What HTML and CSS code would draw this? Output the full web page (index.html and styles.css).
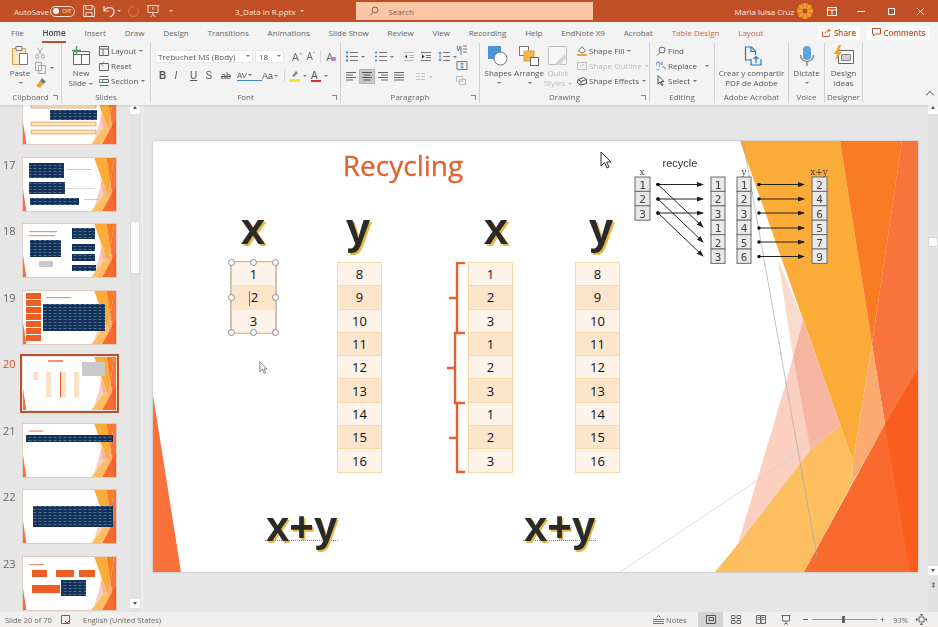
FILE: index.html
```html
<!DOCTYPE html>
<html>
<head>
	<title>3_Data in R.pptx - PowerPoint</title>
	<link rel="stylesheet" href="styles.css">
</head>
<body>
	<svg class="defs" width="0" height="0">
		<defs>
			<pattern id="code" width="5" height="3" patternUnits="userSpaceOnUse">
				<rect width="5" height="3" fill="#12325a"/>
				<rect x="0.5" y="1" width="3" height="0.6" fill="#7d93ad"/>
			</pattern>
		</defs>
		<symbol id="art" viewBox="0 0 765 431" preserveAspectRatio="none">
			<polygon fill="#fbab38" points="587,0 687,0 719,203 700,320"/>
			<polygon fill="#f97c25" points="687,0 749,0 719,203"/>
			<polygon fill="#f9733c" points="749,0 765,0 765,227 732,283 719,203"/>
			<polygon fill="#fbaa70" points="719,203 732,283 699,342 700,320"/>
			<polygon fill="#fadccf" points="625,119 650,179 640,216"/>
			<polygon fill="#f5b5a0" points="650,179 687,283 657,310 640,216"/>
			<polygon fill="#fbd0c0" points="640,216 659,316 585,403 632,245"/>
			<polygon fill="#fdbe5f" points="687,283 700,320 699,342 651,431 562,431 585,403 657,310"/>
			<polygon fill="#f96a2e" points="765,227 765,431 651,431 732,283"/>
			<polygon fill="#fa5e1e" points="732,283 765,227 765,431 757,431"/>
			<polygon fill="#f97039" points="0,254 28,431 0,431"/>
			<line stroke="#a8a8a8" stroke-width="0.7" x1="590" y1="0" x2="664" y2="416"/>
			<line stroke="#cfcfcf" stroke-width="0.7" x1="687" y1="284" x2="467" y2="431"/>
		</symbol>
	</svg>

	<div class="app">
		<header class="titlebar">
			<span class="autosave">AutoSave</span>
			<span class="toggle"><i></i>Off</span>
			<svg class="qa qa-save" width="14" height="14" viewBox="0 0 14 14" fill="none" stroke="#f7ddd0"><path d="M1.5 1.5h9l2 2v9h-11z"/><path d="M4 1.5v4h6v-4M4 12.5v-4h6v4"/></svg>
			<svg class="qa qa-undo" width="14" height="14" viewBox="0 0 14 14" fill="none" stroke="#f7ddd0" stroke-width="1.2"><path d="M2 2v5h5M2 7c2-4 9-5 10 0 .5 3-2 5-4 6"/></svg>
			<span class="tcaret"></span>
			<svg class="qa qa-redo" width="12" height="12" viewBox="0 0 12 12" fill="none" stroke="#dc7a52"><path d="M9.5 2.5a5 5 0 1 1-3-1"/></svg>
			<svg class="qa qa-show" width="14" height="14" viewBox="0 0 14 14" fill="none" stroke="#f7ddd0"><path d="M1 1.500h12M2 1.500v7h10v-7M7 8.500v2M4.500 13l2.500-2.500 2.500 2.500M7 3v3"/></svg>
			<span class="tcaret tcaret-last"></span>
			<span class="doc-name">3_Data in R.pptx</span>
			<span class="tcaret tcaret-doc"></span>
			<div class="search">
				<svg width="10" height="10" viewBox="0 0 10 10" fill="none" stroke="#8a5a44"><circle cx="6" cy="4" r="3"/><path d="M4 6.500 1 9.500"/></svg>
				<span>Search</span>
			</div>
			<span class="user">Maria luisa Cruz</span>
			<svg class="avatar" width="16" height="16" viewBox="0 0 16 16"><circle cx="8" cy="8" r="8" fill="#e8801f"/><path d="M8 0v16M0 8h16M2.300 2.300l11.400 11.400M13.700 2.300 2.300 13.700" stroke="#f4b245" stroke-width="1.300"/><circle cx="8" cy="8" r="2.600" fill="#a9561c"/></svg>
			<svg class="win win-opts" width="10" height="9" viewBox="0 0 10 9" fill="none" stroke="#fff"><path d="M.5.500h9v8h-9zM.5 3h9M5 3v5.500"/></svg>
			<svg class="win win-min" width="9" height="9" viewBox="0 0 9 9" stroke="#fff"><path d="M0 4.500h8"/></svg>
			<svg class="win win-max" width="9" height="9" viewBox="0 0 9 9" fill="none" stroke="#fff"><path d="M1.500 1.500h6v6h-6z"/></svg>
			<svg class="win win-close" width="9" height="9" viewBox="0 0 9 9" stroke="#fff"><path d="M1 1l7 7M8 1 1 8"/></svg>
		</header>

		<nav class="tabs">
			<span>File</span>
			<span class="tab-on">Home</span>
			<span>Insert</span>
			<span>Draw</span>
			<span>Design</span>
			<span>Transitions</span>
			<span>Animations</span>
			<span>Slide Show</span>
			<span>Review</span>
			<span>View</span>
			<span>Recording</span>
			<span>Help</span>
			<span>EndNote X9</span>
			<span>Acrobat</span>
			<span class="tab-ctx">Table Design</span>
			<span class="tab-ctx">Layout</span>
			<div class="tab-btns">
				<span class="tab-btn tab-share"><svg width="9" height="9" viewBox="0 0 9 9" fill="none" stroke="#c2502b"><path d="M.5 3.500v5h7v-2M3 5.500c0-2 2-3 5-3M6 .5l2 2-2 2"/></svg>Share</span>
				<span class="tab-btn tab-comments"><svg width="9" height="9" viewBox="0 0 9 9" fill="none" stroke="#c2502b"><path d="M.5.500h8v5.500h-5l-2 2v-2h-1z"/></svg>Comments</span>
			</div>
		</nav>

		<section class="ribbon">
			<div class="group g-clip">
				<div class="group-body">
					<div class="big big-paste">
						<svg width="20" height="22" viewBox="0 0 20 22" fill="none"><path d="M2.500 3.500h13v16h-13z" stroke="#d59a45" fill="#f8e7c9"/><path d="M6 1.500h6v4h-6z" stroke="#777" fill="#f3f3f3"/><path d="M9.500 8.500h8v11h-8z" stroke="#777" fill="#fff"/></svg>
						<span class="lbl">Paste</span>
						<span class="caret"></span>
					</div>
					<div class="clip-tools">
						<svg width="10" height="12" viewBox="0 0 10 12" fill="none" stroke="#a8a8a8"><path d="M2 .5l5 7M8 .5l-5 7"/><circle cx="2" cy="9.500" r="1.700"/><circle cx="8" cy="9.500" r="1.700"/></svg>
						<span class="clip-copy"><svg width="11" height="12" viewBox="0 0 11 12" fill="none" stroke="#a8a8a8"><path d="M.5.500h6v8h-6zM3.500 3.500h7v8h-7z" fill="#f3f3f3"/></svg><span class="caret"></span></span>
						<svg width="12" height="12" viewBox="0 0 12 12"><path d="M7 1l4 4-3 2-3-3z" fill="#777"/><path d="M5 4l3 3-3 4-4-2z" fill="#eaa33c"/></svg>
					</div>
				</div>
				<div class="group-label">Clipboard<span class="launch"></span></div>
			</div>

			<div class="group g-slides">
				<div class="group-body">
					<div class="big big-slide">
						<svg width="22" height="22" viewBox="0 0 22 22" fill="none"><path d="M3.500 6.500h16v13h-16z" stroke="#666" fill="#f8f8f8"/><path d="M3.500 9.500h16M11.500 9.500v10" stroke="#666"/><path d="M6.500 1v9M2 5.500h9" stroke="#4fa36a" stroke-width="1.400"/></svg>
						<span class="lbl">New</span>
						<span class="lbl">Slide <span class="caret"></span></span>
					</div>
					<div class="col col-slides">
						<span class="item"><svg width="10" height="10" viewBox="0 0 10 10" fill="none" stroke="#666"><path d="M.5.500h9v9h-9zM.5 3h9M4 3v6.500"/></svg>Layout <span class="caret"></span></span>
						<span class="item"><svg width="10" height="10" viewBox="0 0 10 10" fill="none" stroke="#666"><path d="M.5 2.500h9v7h-9z"/><path d="M4.500 1 2 3l2.500 2" stroke="#3a86c8"/></svg>Reset</span>
						<span class="item"><svg width="10" height="10" viewBox="0 0 10 10" fill="none" stroke="#666"><path d="M.5 3.500h9v3h-9zM.5.500h9M.5 9.500h9"/><path d="M.5 3.500h3v3h-3z" stroke="#4fa36a"/></svg>Section <span class="caret"></span></span>
					</div>
				</div>
				<div class="group-label">Slides</div>
			</div>

			<div class="group g-font">
				<div class="group-body rows">
					<div class="row row-top">
						<span class="combo combo-font">Trebuchet MS (Body)<span class="caret"></span></span>
						<span class="combo combo-size">18<span class="caret"></span></span>
						<span class="glyph glyph-grow">A<sup>^</sup></span>
						<span class="glyph glyph-shrink">A<sup>ˇ</sup></span>
						<span class="sep"></span>
						<span class="glyph glyph-clear">A<i></i></span>
					</div>
					<div class="row row-fmt">
						<b class="fmt">B</b>
						<i class="fmt">I</i>
						<u class="fmt">U</u>
						<span class="fmt">S</span>
						<s class="fmt fmt-ab">ab</s>
						<span class="fmt fmt-av">AV<span class="caret"></span></span>
						<span class="fmt fmt-case">Aa<span class="caret"></span></span>
						<span class="sep sep-fmt"></span>
						<span class="fmt fmt-hl"><svg width="11" height="12" viewBox="0 0 11 12"><path d="M7 1l2 2-4 4-2-1z" fill="#888"/><rect y="9" width="11" height="3" fill="#f5e52c"/></svg><span class="caret"></span></span>
						<span class="fmt fmt-col">A<span class="caret"></span></span>
					</div>
				</div>
				<div class="group-label">Font<span class="launch"></span></div>
			</div>

			<div class="group g-para">
				<div class="group-body">
					<div class="rows para-main">
						<div class="row para-top">
							<svg width="12" height="11" viewBox="0 0 12 11" stroke="#777"><path d="M4 1.500h8M4 5.500h8M4 9.500h8"/><path d="M0 1.500h2M0 5.500h2M0 9.500h2" stroke="#3a86c8" stroke-width="2"/></svg><span class="caret"></span>
							<svg class="pg" width="12" height="11" viewBox="0 0 12 11" stroke="#777"><path d="M4 1.500h8M4 5.500h8M4 9.500h8"/><path d="M0 1.500h2M0 5.500h2M0 9.500h2" stroke="#3a86c8" stroke-width="1.500"/></svg><span class="caret"></span>
							<svg class="pg" width="10" height="9" viewBox="0 0 10 9" stroke="#bbb"><path d="M0 .5h10M5 3.500h5M5 5.500h5M0 8.500h10M3 2.500 1 4.500l2 2"/></svg>
							<svg class="pg2" width="10" height="9" viewBox="0 0 10 9" stroke="#777"><path d="M0 .5h10M5 3.500h5M5 5.500h5M0 8.500h10"/><path d="M1 2.500l2 2-2 2" stroke="#3a86c8"/></svg>
							<svg class="pg2" width="12" height="11" viewBox="0 0 12 11" stroke="#777"><path d="M5 1.500h7M5 5.500h7M5 9.500h7"/><path d="M2 1v9M.5 2.500 2 1l1.500 1.500M.5 8.500 2 10l1.500-1.500" stroke="#3a86c8" fill="none"/></svg><span class="caret"></span>
						</div>
						<div class="row para-bot">
							<span class="al"><svg width="10" height="9" viewBox="0 0 10 9" stroke="#666"><path d="M0 .5h10M0 3h7M0 5.500h10M0 8h7"/></svg></span>
							<span class="al al-on"><svg width="10" height="9" viewBox="0 0 10 9" stroke="#555"><path d="M0 .5h10M1.500 3h7M0 5.500h10M1.500 8h7"/></svg></span>
							<span class="al"><svg width="10" height="9" viewBox="0 0 10 9" stroke="#666"><path d="M0 .5h10M3 3h7M0 5.500h10M3 8h7"/></svg></span>
							<span class="al"><svg width="10" height="9" viewBox="0 0 10 9" stroke="#666"><path d="M0 .5h10M0 3h10M0 5.500h10M0 8h10"/></svg></span>
							<span class="al al-cols"><svg width="9" height="7" viewBox="0 0 9 7" stroke="#c4c4c4"><path d="M0 .5h4M5 .5h4M0 3.500h4M5 3.500h4M0 6.500h4M5 6.500h4"/></svg><span class="caret caret-off"></span></span>
						</div>
					</div>
					<div class="col para-side">
						<svg width="11" height="11" viewBox="0 0 11 11" stroke="#777" fill="none"><path d="M5 1v9M7 1h4M7 4h4M7 7h4"/><path d="M1 1l1.500 5L4 1" stroke="#3a86c8"/></svg>
						<svg width="12" height="11" viewBox="0 0 12 11" stroke="#777" fill="none"><path d="M1 1.500h10v8H1z"/><path d="M6 3v5M4.500 4 6 3l1.500 1M4.500 7 6 8l1.500-1" stroke="#3a86c8"/></svg>
						<svg width="12" height="11" viewBox="0 0 12 11" stroke="#bbb" fill="none"><path d="M.5 1.500h6v5h-6zM3.500 4.500h6v5h-6z" fill="#f3f3f3"/></svg>
					</div>
				</div>
				<div class="group-label">Paragraph<span class="launch"></span></div>
			</div>

			<div class="group g-draw">
				<div class="group-body">
					<div class="big big-shapes">
						<svg width="22" height="22" viewBox="0 0 22 22"><rect x="1" y="1" width="13" height="13" fill="#4d93d9"/><circle cx="13.500" cy="13.500" r="6.500" fill="#fff" stroke="#777"/></svg>
						<span class="lbl">Shapes</span>
						<span class="caret"></span>
					</div>
					<div class="big big-arrange">
						<svg width="22" height="22" viewBox="0 0 22 22"><rect x="1.500" y="1.500" width="9" height="9" fill="#fff" stroke="#777"/><rect x="6" y="6" width="10" height="10" fill="#f2b64c" stroke="#e2a33a"/><rect x="12.500" y="12.500" width="8" height="8" fill="#fff" stroke="#666"/></svg>
						<span class="lbl">Arrange</span>
						<span class="caret"></span>
					</div>
					<div class="big big-quick">
						<svg width="22" height="22" viewBox="0 0 22 22" fill="none"><rect x="1.500" y="1.500" width="18" height="18" rx="1" stroke="#bdbdbd" fill="#f7f7f7"/><path d="M8 19l9-9 3 2-7 8" fill="#d4d4d4"/></svg>
						<span class="lbl lbl-off">Quick</span>
						<span class="lbl lbl-off">Styles <span class="caret caret-off"></span></span>
					</div>
					<div class="col col-shape">
						<span class="item"><svg width="10" height="10" viewBox="0 0 10 10"><path d="M5 .5 8.500 5 5 7 1.500 5z" fill="#fff" stroke="#777"/><rect y="8" width="10" height="2" fill="#eaa33c"/></svg>Shape Fill <span class="caret"></span></span>
						<span class="item item-off"><svg width="10" height="10" viewBox="0 0 10 10" fill="none" stroke="#bdbdbd"><path d="M.5 1.500h9v7h-9zM3 6.500 7 3"/></svg>Shape Outline <span class="caret caret-off"></span></span>
						<span class="item"><svg width="10" height="10" viewBox="0 0 10 10" fill="none" stroke="#555"><path d="M1 3.500 6.500 1.500l3 2v4l-6 1.500-3-2z"/><path d="M1 3.500l3 2v3.500M4 5.500l5.500-2"/></svg>Shape Effects <span class="caret"></span></span>
					</div>
				</div>
				<div class="group-label">Drawing<span class="launch"></span></div>
			</div>

			<div class="group g-edit">
				<div class="group-body">
					<div class="col col-edit">
						<span class="item"><svg width="10" height="10" viewBox="0 0 10 10" fill="none" stroke="#666"><circle cx="6" cy="4" r="3"/><path d="M4 6.500 1 9.500"/></svg>Find</span>
						<span class="item"><svg width="10" height="10" viewBox="0 0 10 10" fill="none" stroke="#3a86c8"><path d="M.5 4.500a2 2 0 1 1 3 0v1M.5 8c1 1 2 1 3 0M6 6.500a1.500 1.500 0 1 1 3 2"/><path d="M6 1v3" stroke="#9b59b6"/></svg>Replace <span class="caret caret-gap"></span></span>
						<span class="item"><svg width="10" height="11" viewBox="0 0 10 11" fill="none" stroke="#555"><path d="M2 .5v8.500l2-2 2 3.500 1-.5-2-3.500h3z"/></svg>Select <span class="caret"></span></span>
					</div>
				</div>
				<div class="group-label">Editing</div>
			</div>

			<div class="group g-adobe">
				<div class="group-body">
					<div class="big big-adobe">
						<svg width="22" height="22" viewBox="0 0 22 22" fill="none" stroke="#1f7dc4" stroke-width="1.200"><path d="M10 15H4.500V2h6l4 4v4"/><path d="M10 2v4.500h4.500"/><path d="M10 14v6h10v-6M15 18v-6M12.500 14l2.500-2.500 2.500 2.500"/></svg>
						<span class="lbl">Crear y compartir</span>
						<span class="lbl">PDF de Adobe</span>
					</div>
				</div>
				<div class="group-label">Adobe Acrobat</div>
			</div>

			<div class="group g-voice">
				<div class="group-body">
					<div class="big big-mic">
						<svg width="16" height="22" viewBox="0 0 16 22" fill="none"><rect x="4" y="1" width="8" height="14" rx="4" fill="#5ba4e0"/><path d="M1.500 10a6.500 6.500 0 0 0 13 0M8 16.500V21" stroke="#777" stroke-width="1.200"/></svg>
						<span class="lbl">Dictate</span>
						<span class="caret"></span>
					</div>
				</div>
				<div class="group-label">Voice</div>
			</div>

			<div class="group g-design">
				<div class="group-body">
					<div class="big big-design">
						<svg width="22" height="22" viewBox="0 0 22 22" fill="none"><path d="M5.500 5.500h15v13h-15z" stroke="#666" fill="#f8f8f8"/><path d="M8.500 9.500h9v6h-9z" fill="#cfcfcf" stroke="#888"/><path d="M6 0 1 9h3l-2 7 7-9H5.500L8 0z" fill="#eea234"/></svg>
						<span class="lbl">Design</span>
						<span class="lbl">Ideas</span>
					</div>
				</div>
				<div class="group-label">Designer</div>
			</div>
			<span class="collapse"></span>
		</section>

		<main class="main">
			<aside class="thumbs">
				<div class="thumb-list">
					<div class="thumb-row thumb-first">
						<span class="num"></span>
						<svg class="thumb" viewBox="0 0 93 53"><use href="#art" width="93" height="53"/><rect class="t-yel" x="8" y="13" width="65" height="4"/><rect class="t-navy" x="27" y="19" width="47" height="10"/><rect class="t-yel" x="8" y="31" width="65" height="4"/><rect class="t-yel" x="8" y="39" width="65" height="4"/></svg>
					</div>
					<div class="thumb-row">
						<span class="num">17</span>
						<svg class="thumb" viewBox="0 0 93 53"><use href="#art" width="93" height="53"/><rect class="t-navy" x="6" y="5" width="35" height="15"/><rect class="t-navy" x="6" y="24" width="36" height="12"/><rect class="t-navy" x="7" y="40" width="49" height="7"/><rect class="t-line" x="44" y="11" width="24" height="1"/><rect class="t-line" x="44" y="30" width="28" height="0.700"/><rect class="t-line" x="61" y="41" width="25" height="1"/></svg>
					</div>
					<div class="thumb-row">
						<span class="num">18</span>
						<svg class="thumb" viewBox="0 0 93 53"><use href="#art" width="93" height="53"/><rect class="t-red" x="6" y="7" width="28" height="1.200"/><rect class="t-red" x="6" y="11" width="26" height="1.200"/><rect class="t-navy" x="7" y="16" width="31" height="17"/><rect class="t-navy" x="49" y="4" width="23" height="11"/><rect class="t-navy" x="49" y="20" width="23" height="7"/><rect class="t-navy" x="49" y="30" width="23" height="7"/><rect class="t-navy" x="49" y="41" width="24" height="6"/><rect class="t-line" x="16" y="37" width="14" height="6"/></svg>
					</div>
					<div class="thumb-row">
						<span class="num">19</span>
						<svg class="thumb" viewBox="0 0 93 53"><use href="#art" width="93" height="53"/><rect class="t-org" x="3" y="2" width="15" height="6"/><rect class="t-org" x="3" y="9" width="15" height="6"/><rect class="t-org" x="3" y="16" width="15" height="6"/><rect class="t-org" x="3" y="23" width="15" height="6"/><rect class="t-org" x="3" y="30" width="15" height="6"/><rect class="t-org" x="3" y="37" width="15" height="6"/><rect class="t-org" x="3" y="44" width="15" height="6"/><rect class="t-red" x="23" y="6" width="25" height="1.200"/><rect class="t-navy" x="20" y="13" width="62" height="27"/></svg>
					</div>
					<div class="thumb-row thumb-sel">
						<span class="num">20</span>
						<svg class="thumb" viewBox="0 0 93 53"><use href="#art" width="93" height="53"/><rect class="t-red" x="25" y="3" width="15" height="2"/><rect class="t-peach" x="10" y="15" width="5" height="8"/><rect class="t-peach" x="23" y="15" width="5" height="25"/><rect class="t-peach" x="38" y="15" width="5" height="25"/><rect class="t-org" x="37" y="15" width="1" height="25"/><rect class="t-peach" x="51" y="15" width="5" height="25"/><rect class="t-line" x="59" y="5" width="23" height="14"/></svg>
					</div>
					<div class="thumb-row">
						<span class="num">21</span>
						<svg class="thumb" viewBox="0 0 93 53"><use href="#art" width="93" height="53"/><rect class="t-red" x="6" y="6.500" width="14" height="1.200"/><rect class="t-navy" x="3" y="11" width="87" height="7"/></svg>
					</div>
					<div class="thumb-row">
						<span class="num">22</span>
						<svg class="thumb" viewBox="0 0 93 53"><use href="#art" width="93" height="53"/><rect class="t-navy" x="10" y="16" width="80" height="21"/></svg>
					</div>
					<div class="thumb-row">
						<span class="num">23</span>
						<svg class="thumb" viewBox="0 0 93 53"><use href="#art" width="93" height="53"/><rect class="t-red" x="6" y="7" width="15" height="1.200"/><rect class="t-org" x="9" y="13" width="15" height="7"/><rect class="t-org" x="33" y="13" width="18" height="7"/><rect class="t-org" x="56" y="13" width="16" height="7"/><rect class="t-org" x="9" y="28" width="28" height="8"/><rect class="t-navy" x="38" y="23" width="25" height="16"/></svg>
					</div>
				</div>
				<div class="vscroll vscroll-thumbs">
					<span class="sb-btn sb-up"></span>
					<span class="sb-thumb"></span>
					<span class="sb-btn sb-down"></span>
				</div>
			</aside>

			<div class="canvas">
				<article class="slide">
					<svg class="slide-art"><use href="#art" width="765" height="431"/></svg>

					<h1 class="slide-title">Recycling</h1>

					<div class="letter l-x1">x</div>
					<div class="letter l-y1">y</div>
					<div class="letter l-x2">x</div>
					<div class="letter l-y2">y</div>

					<table class="nums t1 t-selected">
						<tr><td>1</td></tr>
						<tr><td><span class="text-caret"></span>2</td></tr>
						<tr><td>3</td></tr>
					</table>
					<span class="handle h-tl"></span><span class="handle h-tc"></span><span class="handle h-tr"></span>
					<span class="handle h-ml"></span><span class="handle h-mr"></span>
					<span class="handle h-bl"></span><span class="handle h-bc"></span><span class="handle h-br"></span>

					<table class="nums t2">
						<tr><td>8</td></tr><tr><td>9</td></tr><tr><td>10</td></tr>
						<tr><td>11</td></tr><tr><td>12</td></tr><tr><td>13</td></tr>
						<tr><td>14</td></tr><tr><td>15</td></tr><tr><td>16</td></tr>
					</table>

					<table class="nums t3">
						<tr><td>1</td></tr><tr><td>2</td></tr><tr><td>3</td></tr>
						<tr><td>1</td></tr><tr><td>2</td></tr><tr><td>3</td></tr>
						<tr><td>1</td></tr><tr><td>2</td></tr><tr><td>3</td></tr>
					</table>

					<table class="nums t4">
						<tr><td>8</td></tr><tr><td>9</td></tr><tr><td>10</td></tr>
						<tr><td>11</td></tr><tr><td>12</td></tr><tr><td>13</td></tr>
						<tr><td>14</td></tr><tr><td>15</td></tr><tr><td>16</td></tr>
					</table>

					<svg class="braces" width="24" height="224" viewBox="0 0 24 224" fill="none" stroke="#ea5f2d" stroke-width="2.400">
						<path d="M18 1H10V71M2 36H10M18 71H8V141H18M0 106H8M10 141V210H18M2 176H10"/>
					</svg>

					<div class="sum sum-1">x+y</div>
					<div class="sum sum-2">x+y</div>

					<svg class="recycle" width="210" height="130" viewBox="0 0 210 130">
						<defs>
							<marker id="tip" markerWidth="7" markerHeight="5" refX="6" refY="2.500" orient="auto" markerUnits="userSpaceOnUse"><path d="M0 0 7 2.500 0 5z" fill="#222"/></marker>
							<marker id="dot" markerWidth="4" markerHeight="4" refX="2" refY="2" markerUnits="userSpaceOnUse"><circle cx="2" cy="2" r="1.700" fill="#111"/></marker>
						</defs>
						<text class="r-label" x="60" y="27" text-anchor="middle">recycle</text>
						<text class="r-head" x="22" y="35" text-anchor="middle">x</text>
						<text class="r-head" x="124" y="35" text-anchor="middle">y</text>
						<text class="r-head" x="199" y="35" text-anchor="middle">x+y</text>

						<g class="r-col">
							<rect x="15" y="37" width="15" height="14.400"/><rect x="15" y="51.400" width="15" height="14.400"/><rect x="15" y="65.800" width="15" height="14.400"/>
							<rect x="91" y="37" width="14" height="14.400"/><rect x="91" y="51.400" width="14" height="14.400"/><rect x="91" y="65.800" width="14" height="14.400"/><rect x="91" y="80.200" width="14" height="14.400"/><rect x="91" y="94.600" width="14" height="14.400"/><rect x="91" y="109" width="14" height="14.400"/>
							<rect x="117" y="37" width="14" height="14.400"/><rect x="117" y="51.400" width="14" height="14.400"/><rect x="117" y="65.800" width="14" height="14.400"/><rect x="117" y="80.200" width="14" height="14.400"/><rect x="117" y="94.600" width="14" height="14.400"/><rect x="117" y="109" width="14" height="14.400"/>
							<rect x="192" y="37" width="15" height="14.400"/><rect x="192" y="51.400" width="15" height="14.400"/><rect x="192" y="65.800" width="15" height="14.400"/><rect x="192" y="80.200" width="15" height="14.400"/><rect x="192" y="94.600" width="15" height="14.400"/><rect x="192" y="109" width="15" height="14.400"/>
						</g>
						<g class="r-num" text-anchor="middle">
							<text x="22.500" y="49">1</text><text x="22.500" y="63">2</text><text x="22.500" y="78">3</text>
							<text x="98" y="49">1</text><text x="98" y="63">2</text><text x="98" y="78">3</text><text x="98" y="92">1</text><text x="98" y="107">2</text><text x="98" y="121">3</text>
							<text x="124" y="49">1</text><text x="124" y="63">2</text><text x="124" y="78">3</text><text x="124" y="92">4</text><text x="124" y="107">5</text><text x="124" y="121">6</text>
							<text x="199.500" y="49">2</text><text x="199.500" y="63">4</text><text x="199.500" y="78">6</text><text x="199.500" y="92">5</text><text x="199.500" y="107">7</text><text x="199.500" y="121">9</text>
						</g>
						<g class="r-arrows">
							<line x1="38" y1="44.500" x2="83" y2="44.500"/><line x1="38" y1="59" x2="83" y2="59"/><line x1="38" y1="73" x2="83" y2="73"/>
							<line x1="38" y1="44.500" x2="83" y2="87"/><line x1="38" y1="59" x2="83" y2="102"/><line x1="38" y1="73" x2="83" y2="116"/>
							<line x1="139" y1="44.500" x2="184" y2="44.500"/><line x1="139" y1="59" x2="184" y2="59"/><line x1="139" y1="73" x2="184" y2="73"/><line x1="139" y1="88" x2="184" y2="88"/><line x1="139" y1="102" x2="184" y2="102"/><line x1="139" y1="116.500" x2="184" y2="116.500"/>
						</g>
					</svg>

					<svg class="cursor cursor-a" width="12" height="18" viewBox="0 0 12 18"><path d="M1 1v14l3.500-3.500 2.500 5.500 2-1-2.500-5H11z" fill="#fff" stroke="#333"/></svg>
					<svg class="cursor cursor-b" width="9" height="13" viewBox="0 0 12 18"><path d="M1 1v14l3.500-3.500 2.500 5.500 2-1-2.500-5H11z" fill="#fff" stroke="#555"/></svg>
				</article>
				<div class="vscroll vscroll-main">
					<span class="sb-btn sb-up"></span>
					<span class="sb-thumb"></span>
					<span class="sb-btn sb-down"></span>
					<span class="sb-nav">⇞</span>
				</div>
			</div>
		</main>

		<footer class="statusbar">
			<span class="st-slide">Slide 20 of 70</span>
			<svg class="st-spell" width="10" height="10" viewBox="0 0 10 10" fill="none" stroke="#666"><path d="M.5.500h8v8h-8z"/><path d="M4 6l2 2 3-3" stroke="#c2502b"/></svg>
			<span class="st-lang">English (United States)</span>
			<span class="st-notes"><svg width="11" height="9" viewBox="0 0 11 9" stroke="#777" fill="none"><path d="M0 4.500h11M0 6.500h11M0 8.500h11M3.500 2.500 5.500.5l2 2"/></svg>Notes</span>
			<span class="view view-on"><svg width="10" height="9" viewBox="0 0 10 9" fill="none" stroke="#555"><path d="M.5.500h9v8h-9zM3 2.500h4.500v3H3z"/></svg></span>
			<span class="view"><svg width="10" height="9" viewBox="0 0 10 9" fill="none" stroke="#666"><path d="M.5.500h3.500v3H.5zM6 .5h3.500v3H6zM.5 5.500h3.500v3H.5zM6 5.500h3.500v3H6z"/></svg></span>
			<span class="view"><svg width="10" height="9" viewBox="0 0 10 9" fill="none" stroke="#666"><path d="M.5.500h4v8h-4zM5 .5h4.500v8H5zM1.500 2.500h2M1.500 4.500h2M6 2.500h2.500M6 4.500h2.500"/></svg></span>
			<span class="view"><svg width="10" height="10" viewBox="0 0 10 10" fill="none" stroke="#666"><path d="M.5.500h9M1.500.5v5.500h7V.5M5 6v2M3 9.500l2-1.500 2 1.500"/></svg></span>
			<span class="zoom-minus"></span>
			<span class="zoom-track"><i></i></span>
			<span class="zoom-plus">+</span>
			<span class="zoom-val">93%</span>
			<svg class="st-fit" width="11" height="11" viewBox="0 0 11 11" fill="none" stroke="#666"><path d="M3 3h5v5H3zM5.500 0v2M4 1l1.500-1L7 1M5.500 11V9M4 10l1.500 1L7 10M0 5.500h2M1 4 0 5.500 1 7M11 5.500H9M10 4l1 1.500L10 7"/></svg>
		</footer>
	</div>
</body>
</html>
```

FILE: styles.css
```css
* {
	box-sizing: border-box;
}

html,
body {
	margin: 0;
	padding: 0;
	overflow: hidden;
}

body {
	font-family: "Open Sans", "Liberation Sans", sans-serif;
	font-size: 8px;
	color: #555;
	background-color: #e6e6e6;
}

svg {
	display: block;
	flex: none;
}

.defs {
	position: absolute;
}

/* the reference is a soft video frame */
.app {
	display: flex;
	flex-direction: column;
	width: 938px;
	height: 627px;
	filter: blur(0.35px);
}

/* title bar */
.titlebar {
	display: flex;
	align-items: center;
	flex: none;
	height: 22px;
	padding-left: 14px;
	background-color: #c04f25;
	color: #f9e4da;
	white-space: nowrap;
}

.autosave {
	width: 36px;
	font-size: 8px;
}

.toggle {
	display: flex;
	align-items: center;
	justify-content: flex-end;
	flex: none;
	width: 25px;
	height: 11px;
	padding-right: 3px;
	border: 1px solid #f9e4da;
	border-radius: 6px;
	font-size: 6px;
}

.toggle i {
	width: 6px;
	height: 6px;
	margin-right: 3px;
	border-radius: 50%;
	background-color: #fff;
}

.qa-save {
	margin-left: 7px;
}

.qa-undo {
	margin-left: 6px;
}

.qa-redo {
	margin-left: 6px;
}

.qa-show {
	margin-left: 7px;
}

.tcaret {
	flex: none;
	width: 0;
	height: 0;
	margin-left: 1px;
	border: 2px solid transparent;
	border-top: 2.5px solid #f3d6c8;
	border-bottom: 0;
}

.tcaret-last {
	margin-left: 9px;
}

.doc-name {
	margin-left: 62px;
	font-size: 8px;
}

.tcaret-doc {
	margin-left: 4px;
}

.search {
	display: flex;
	align-items: center;
	flex: none;
	gap: 10px;
	width: 237px;
	height: 18px;
	margin-left: 52px;
	padding-left: 13px;
	background-color: #fcc7a8;
	color: #8a5a44;
	font-size: 8px;
}

.user {
	margin-left: 142px;
	font-size: 8px;
	color: #fbeee8;
}

.avatar {
	margin-left: 3px;
}

.win-opts {
	margin-left: 14px;
}

.win-min {
	margin-left: 20px;
}

.win-max {
	margin-left: 21px;
}

.win-close {
	margin-left: 20px;
}

/* tabs */
.tabs {
	display: flex;
	align-items: center;
	flex: none;
	gap: 18.8px;
	height: 21px;
	padding-left: 11px;
	background-color: #f3f3f3;
	font-size: 8px;
	color: #666;
}

.tab-on {
	position: relative;
	color: #444;
	font-weight: 600;
}

.tab-on::after {
	content: "";
	position: absolute;
	left: 0;
	right: 0;
	bottom: -5px;
	height: 2px;
	background-color: #c04f25;
}

.tab-ctx {
	color: #cf6a45;
}

.tab-btns {
	display: flex;
	gap: 7px;
	margin-left: auto;
	padding-right: 8px;
}

.tab-btn {
	display: flex;
	align-items: center;
	justify-content: center;
	gap: 3px;
	height: 14px;
	background-color: #fff;
	color: #c2502b;
	font-weight: 600;
}

.tab-share { width: 42px; }
.tab-comments { width: 63px; }

/* ribbon */
.ribbon {
	position: relative;
	display: flex;
	flex: none;
	height: 62px;
	padding-bottom: 2px;
	background-color: #f3f3f3;
	box-shadow: 0 1px 2px rgba(0, 0, 0, 0.12);
	z-index: 1;
}

.group {
	position: relative;
	display: flex;
	flex-direction: column;
	flex: none;
	border-right: 1px solid #d2d2d2;
}

.group-body {
	display: flex;
	flex: 1;
	min-height: 0;
}

.group-label {
	flex: none;
	height: 11px;
	line-height: 10px;
	text-align: center;
	color: #666;
}

.launch {
	position: absolute;
	right: 3px;
	bottom: 3px;
	width: 5px;
	height: 5px;
	border-left: 1px solid #888;
	border-bottom: 1px solid #888;
	transform: rotate(180deg);
}

.g-clip { width: 62px; }
.g-slides { width: 89px; }
.g-font { width: 190px; }
.g-para { width: 139px; }
.g-draw { width: 170px; }
.g-edit { width: 65px; }
.g-adobe { width: 74px; }
.g-voice { width: 36px; }
.g-design { width: 38px; }

.big {
	display: flex;
	flex-direction: column;
	align-items: center;
	flex: none;
	padding-top: 2px;
}

.big svg {
	margin-bottom: 1px;
	height: 22px;
}

.lbl {
	height: 10px;
	line-height: 10px;
	white-space: nowrap;
	color: #555;
}

.lbl-off {
	color: #bbb;
}

.caret {
	display: inline-block;
	width: 0;
	height: 0;
	margin-left: 1px;
	vertical-align: middle;
	border: 2px solid transparent;
	border-top: 2.5px solid #777;
	border-bottom: 0;
}

.caret-off {
	border-top-color: #c4c4c4;
}

.big > .caret {
	margin-top: 4px;
}

.col {
	display: flex;
	flex-direction: column;
}

.item {
	display: flex;
	align-items: center;
	gap: 2px;
	height: 15px;
	white-space: nowrap;
	color: #555;
}

.item .caret {
	margin-left: 1px;
}

.item-off {
	color: #bbb;
}

.big-paste { width: 30px; margin-left: 5px; }

.clip-tools {
	display: flex;
	flex-direction: column;
	gap: 3px;
	margin-left: 0;
	padding-top: 4px;
}

.clip-copy {
	display: flex;
	align-items: center;
	gap: 3px;
}

.big-slide { width: 32px; margin-left: 3px; }
.col-slides { margin-left: 2px; }

.rows {
	display: flex;
	flex-direction: column;
	gap: 6px;
	padding-top: 7px;
}

.row {
	display: flex;
	align-items: center;
	height: 13px;
}

.row-top {
	padding-left: 4px;
}

.combo {
	position: relative;
	display: flex;
	align-items: center;
	height: 13px;
	margin-right: 2px;
	padding-left: 2px;
	background-color: #fff;
	border: 1px solid #e8e8e8;
	white-space: nowrap;
	color: #555;
}

.combo .caret {
	position: absolute;
	right: 2px;
	top: 4px;
}

.combo-font { width: 98px; }
.combo-size { width: 29px; padding-left: 3px; }

.glyph {
	position: relative;
	font-size: 11px;
	line-height: 13px;
	color: #666;
}

.glyph sup {
	font-size: 6px;
	line-height: 0;
	color: #3a86c8;
}

.glyph-grow { margin-left: 6px; }
.glyph-shrink { margin-left: 4px; font-size: 10px; }
.glyph-clear { font-size: 11px; }

.glyph-clear i {
	position: absolute;
	right: -3px;
	bottom: 2px;
	width: 5px;
	height: 4px;
	background-color: #c77bd0;
	border-radius: 1px;
}

.sep {
	width: 1px;
	height: 13px;
	margin: 0 5px;
	background-color: #d8d8d8;
}

.sep-fmt {
	margin: 0 4px 0 1px;
}

.row-fmt {
	padding-left: 8px;
}

.fmt {
	display: inline-flex;
	align-items: center;
	width: 15.500px;
	font-size: 10px;
	color: #555;
	font-family: "Liberation Sans", sans-serif;
}

.fmt-ab { width: 16px; margin-left: 0; font-size: 9px; }
.fmt-av { width: 25px; font-size: 8px; border-bottom: 1px solid #3a86c8; height: 10px; }
.fmt-case { width: 21px; margin-left: 0; font-size: 9px; }
.fmt-hl { width: 22px; gap: 2px; }

.fmt-col {
	width: 20px;
	color: #555;
	background: linear-gradient(#e8302a, #e8302a) left bottom / 10px 2px no-repeat;
	height: 12px;
	gap: 1px;
}

.fmt-col .caret {
	margin-left: 5px;
}

.para-main {
	width: 115px;
}

.para-top {
	padding-left: 5px;
	gap: 2px;
}

.para-top .pg { margin-left: 8px; }
.para-top .pg2 { margin-left: 5px; }

.para-bot {
	padding-left: 2px;
	height: 15px;
	margin-top: 0;
}

.al {
	display: flex;
	align-items: center;
	justify-content: center;
	width: 16px;
	height: 15px;
}

.al-on {
	background-color: #c8c8c8;
	border: 1px solid #b4b4b4;
}

.al-cols {
	width: 26px;
	gap: 3px;
	margin-left: 4px;
}

.para-side {
	gap: 4px;
	padding-top: 2px;
	padding-left: 0;
}

.big-shapes { width: 34px; margin-left: 1px; }
.big-arrange { width: 28px; margin-left: 0; }
.big-quick { width: 30px; }
.col-shape { margin-left: 4px; }

.col-edit { margin-left: 6px; }
.caret-gap { margin-left: 6px !important; }

.big-adobe { width: 100%; }
.big-mic { width: 100%; }
.big-design { width: 100%; }

.collapse {
	position: absolute;
	right: 5px;
	bottom: 7px;
	width: 6px;
	height: 6px;
	border-left: 1px solid #777;
	border-top: 1px solid #777;
	transform: rotate(45deg);
}

/* main area */
.main {
	display: flex;
	flex: 1;
	min-height: 0;
	background-color: #e6e6e6;
}

.thumbs {
	position: relative;
	flex: none;
	width: 143px;
	overflow: hidden;
	border-right: 1px solid #f1f1f1;
}

.thumb-list {
	margin-top: -14px;
}

.thumb-row {
	display: flex;
	height: 53px;
	margin-bottom: 13.5px;
	padding-left: 3px;
}

.num {
	width: 20px;
	font-size: 11px;
	line-height: 13px;
	color: #666;
}

.thumb {
	width: 93px;
	height: 53px;
	background-color: #fff;
	outline: 1px solid #dfcdc4;
}

.thumb-sel .num {
	color: #c8552b;
}

.thumb-sel .thumb {
	outline: 2px solid #b9502c;
	outline-offset: 1px;
}

.t-navy { fill: url(#code); }
.t-yel { fill: #fbe0b5; stroke: #c97a3a; stroke-width: 0.5; }
.t-org { fill: #ee5e24; }
.t-red { fill: #ef9272; }
.t-line { fill: #c9c9c9; }
.t-peach { fill: #fbe2c6; }

.vscroll {
	position: absolute;
	top: 0;
	bottom: 0;
	width: 10px;
	background-color: #e2e2e3;
}

.vscroll-thumbs {
	left: 130px;
}

.sb-btn {
	position: absolute;
	left: 0;
	width: 10px;
	height: 9px;
	background-color: #fbfbfb;
}

.sb-btn::after {
	content: "";
	position: absolute;
	left: 3px;
	top: 3px;
	border: 2px solid transparent;
}

.sb-up {
	top: 0;
}

.sb-up::after {
	top: 1px;
	border-bottom: 3px solid #555;
	border-top: 0;
}

.sb-down {
	bottom: 4px;
}

.sb-down::after {
	border-top: 3px solid #555;
	border-bottom: 0;
}

.sb-thumb {
	position: absolute;
	left: 0;
	top: 116px;
	width: 10px;
	height: 53px;
	background-color: #fbfbfb;
	border: 1px solid #d8d8d8;
}

.canvas {
	position: relative;
	flex: 1;
	min-width: 0;
	padding: 36px 0 0 10px;
}

.vscroll-main {
	right: 0;
}

.vscroll-main .sb-thumb {
	top: 132px;
	height: 10px;
}

.vscroll-main .sb-down {
	bottom: 37px;
}

.sb-nav {
	position: absolute;
	left: 2px;
	bottom: 22px;
	font-size: 8px;
	line-height: 10px;
	color: #666;
}

/* slide: objects sit on a free canvas */
.slide {
	position: relative;
	width: 765px;
	height: 431px;
	background-color: #fff;
	box-shadow: 0 0 2px rgba(0, 0, 0, 0.25);
	color: #111;
}

.slide-art {
	position: absolute;
	left: 0;
	top: 0;
	width: 765px;
	height: 431px;
}

.slide-title {
	position: absolute;
	left: 150px;
	top: 3px;
	width: 200px;
	margin: 0;
	font-family: "Open Sans", sans-serif;
	font-size: 28px;
	line-height: 42px;
	font-weight: 400;
	text-align: center;
	color: #e0622f;
	-webkit-text-stroke: 0.3px #e0622f;
}

.letter {
	position: absolute;
	top: 61px;
	width: 60px;
	font-family: "Liberation Sans", sans-serif;
	font-size: 44px;
	font-weight: 700;
	line-height: 54px;
	text-align: center;
	color: #2a2a2a;
	text-shadow: 2px 2px 0 #e6b844;
}

.l-x1 { left: 70px; }
.l-y1 { left: 175px; }
.l-x2 { left: 313px; }
.l-y2 { left: 418px; }

.nums {
	position: absolute;
	top: 121px;
	width: 45px;
	border-collapse: collapse;
	font-family: "Open Sans", sans-serif;
	font-size: 13px;
	color: #111;
}

.nums td {
	height: 23.3px;
	padding: 0;
	border: 1px solid #fad9a8;
	text-align: center;
	background-color: #fdf3e8;
	line-height: 20px;
}

.nums tr:nth-child(even) td {
	background-color: #fce5cb;
}

.t1 { left: 78px; }
.t2 { left: 184px; }
.t3 { left: 315px; }
.t4 { left: 422px; }

.t-selected td {
	border-color: #f5e2cf;
	border-left-color: #d0c3b8;
	border-right-color: #d0c3b8;
}

.t-selected {
	outline: 1px solid #cbbcb0;
}

.text-caret {
	display: inline-block;
	width: 1px;
	height: 15px;
	margin-right: 1px;
	vertical-align: middle;
	background-color: #777;
}

.handle {
	position: absolute;
	width: 7px;
	height: 7px;
	border: 1px solid #8c8c8c;
	border-radius: 50%;
	background-color: #fff;
}

.h-tl { left: 75px; top: 118px; }
.h-tc { left: 97px; top: 118px; }
.h-tr { left: 119px; top: 118px; }
.h-ml { left: 75px; top: 153px; }
.h-mr { left: 119px; top: 153px; }
.h-bl { left: 75px; top: 188px; }
.h-bc { left: 97px; top: 188px; }
.h-br { left: 119px; top: 188px; }

.braces {
	position: absolute;
	left: 294px;
	top: 121px;
}

.sum {
	position: absolute;
	top: 367px;
	height: 33px;
	padding: 0 1px;
	font-family: "Liberation Sans", sans-serif;
	font-size: 42px;
	font-weight: 700;
	line-height: 37px;
	color: #2a2a2a;
	text-shadow: 1.5px 1.5px 0 #e6b844;
	border-bottom: 1px dotted #e25a48;
	overflow: visible;
}

.sum-1 { left: 112px; }
.sum-2 { left: 370px; }

.recycle {
	position: absolute;
	left: 467px;
	top: -1px;
	overflow: visible;
}

.r-label {
	font-family: "Liberation Sans", sans-serif;
	font-size: 11px;
	fill: #333;
}

.r-head {
	font-family: "DejaVu Serif", serif;
	font-size: 9px;
	fill: #444;
}

.r-col rect {
	fill: #e9e9e9;
	stroke: #6d6d6d;
	stroke-width: 1;
}

.r-num {
	font-family: "DejaVu Sans Mono", monospace;
	font-size: 11px;
	fill: #444;
}

.r-arrows line {
	stroke: #222;
	stroke-width: 1;
	marker-start: url(#dot);
	marker-end: url(#tip);
}

.cursor {
	position: absolute;
}

.cursor-a { left: 447px; top: 10px; }
.cursor-b { left: 106px; top: 220px; }

/* status bar */
.statusbar {
	display: flex;
	align-items: center;
	flex: none;
	height: 15px;
	padding-left: 5px;
	background-color: #f2f0ef;
	font-size: 7.5px;
	color: #666;
}

.st-slide { width: 56px; }
.st-spell { margin-left: 0; }
.st-lang { margin-left: 12px; width: 570px; }

.st-notes {
	display: flex;
	align-items: center;
	gap: 2px;
	width: 45px;
}

.view {
	display: flex;
	align-items: center;
	justify-content: center;
	width: 25px;
	height: 15px;
}

.view-on {
	background-color: #d2d2d2;
}

.zoom-minus {
	width: 5px;
	height: 1px;
	margin-left: 5px;
	background-color: #666;
}

.zoom-track {
	position: relative;
	width: 65px;
	height: 1px;
	margin-left: 4px;
	background-color: #999;
}

.zoom-track i {
	position: absolute;
	left: 30px;
	top: -3px;
	width: 3px;
	height: 7px;
	background-color: #666;
}

.zoom-plus {
	margin-left: 3px;
	font-size: 9px;
}

.zoom-val {
	margin-left: 8px;
}

.st-fit {
	margin-left: 8px;
}
```
